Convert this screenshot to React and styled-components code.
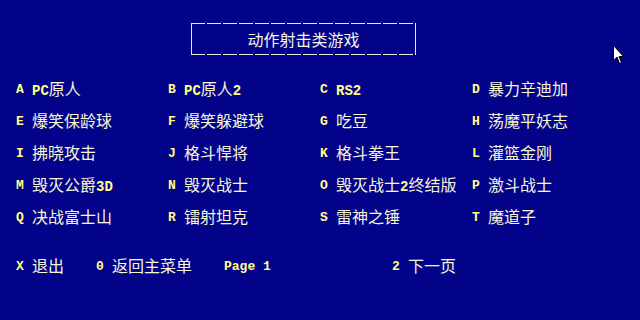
import React from 'react';
import styled, { createGlobalStyle } from 'styled-components';

const GlobalStyle = createGlobalStyle`
  html, body {
    margin: 0;
    padding: 0;
    background: #03038a;
  }
`;

const Screen = styled.div`
  position: relative;
  width: 640px;
  height: 320px;
  box-sizing: border-box;
  padding-top: 23px;
  background: #03038a;
  overflow: hidden;
  font-family: "Noto Sans CJK SC", "DejaVu Sans", sans-serif;
`;

const TitleBox = styled.div`
  margin-left: 191px;
  width: 225px;
  height: 32px;
  display: flex;
  align-items: center;
  justify-content: center;
  box-sizing: border-box;
  color: #f4f4e4;
  font-size: 16px;
  background:
    repeating-linear-gradient(90deg, #e8e8e8 0 14px, transparent 14px 16px) top left / 100% 1px no-repeat,
    repeating-linear-gradient(90deg, #e8e8e8 0 14px, transparent 14px 16px) bottom left / 100% 1px no-repeat,
    linear-gradient(#e8e8e8, #e8e8e8) top left / 1px 100% no-repeat,
    linear-gradient(#e8e8e8, #e8e8e8) top right / 1px 100% no-repeat;
`;

const Grid = styled.div`
  margin-top: 17px;
  padding-left: 16px;
  display: grid;
  grid-template-columns: repeat(4, 152px);
  grid-auto-rows: 32px;
`;

const Item = styled.div`
  display: flex;
  align-items: center;
  white-space: nowrap;
  width: ${(p) => p.$width || 'auto'};
`;

const Key = styled.span`
  width: 16px;
  flex: none;
  padding-top: 3px;
  font-family: "Liberation Mono", "DejaVu Sans Mono", monospace;
  font-weight: bold;
  font-size: 13px;
  color: #ffff8c;
`;

const Label = styled.span`
  font-size: 16px;
  color: #f6f6d8;
`;

const Latin = styled.span`
  font-family: "Liberation Mono", "DejaVu Sans Mono", monospace;
  font-weight: bold;
  font-size: 14px;
  color: #ffff8c;
`;

const Footer = styled.div`
  margin-top: 17px;
  padding-left: 16px;
  height: 32px;
  display: flex;
  align-items: center;
`;

const PageLabel = styled.span`
  width: 168px;
  padding-top: 3px;
  font-family: "Liberation Mono", "DejaVu Sans Mono", monospace;
  font-weight: bold;
  font-size: 13px;
  color: #ffff8c;
  white-space: pre;
`;

const Cursor = styled.svg`
  position: absolute;
  left: 613px;
  top: 45px;
`;

const games = [
  ['A', <><Latin>PC</Latin>原人</>],
  ['B', <><Latin>PC</Latin>原人<Latin>2</Latin></>],
  ['C', <Latin>RS2</Latin>],
  ['D', '暴力辛迪加'],
  ['E', '爆笑保龄球'],
  ['F', '爆笑躲避球'],
  ['G', '吃豆'],
  ['H', '荡魔平妖志'],
  ['I', '拂晓攻击'],
  ['J', '格斗悍将'],
  ['K', '格斗拳王'],
  ['L', '灌篮金刚'],
  ['M', <>毁灭公爵<Latin>3D</Latin></>],
  ['N', '毁灭战士'],
  ['O', <>毁灭战士<Latin>2</Latin>终结版</>],
  ['P', '激斗战士'],
  ['Q', '决战富士山'],
  ['R', '镭射坦克'],
  ['S', '雷神之锤'],
  ['T', '魔道子'],
];

export default function App() {
  return (
    <Screen>
      <GlobalStyle />
      <TitleBox>动作射击类游戏</TitleBox>
      <Grid>
        {games.map(([key, name]) => (
          <Item key={key}>
            <Key>{key}</Key>
            <Label>{name}</Label>
          </Item>
        ))}
      </Grid>
      <Footer>
        <Item $width="80px">
          <Key>X</Key>
          <Label>退出</Label>
        </Item>
        <Item $width="128px">
          <Key>0</Key>
          <Label>返回主菜单</Label>
        </Item>
        <PageLabel>Page 1</PageLabel>
        <Item>
          <Key>2</Key>
          <Label>下一页</Label>
        </Item>
      </Footer>
      <Cursor width="12" height="20" viewBox="0 0 12 20">
        <path d="M0.5 0.5 L0.5 15.5 L4 12 L6.5 18.5 L8.5 17.5 L6 11.5 L10.5 11.5 Z" fill="#ffffff" stroke="#000000" strokeWidth="1" />
      </Cursor>
    </Screen>
  );
}
